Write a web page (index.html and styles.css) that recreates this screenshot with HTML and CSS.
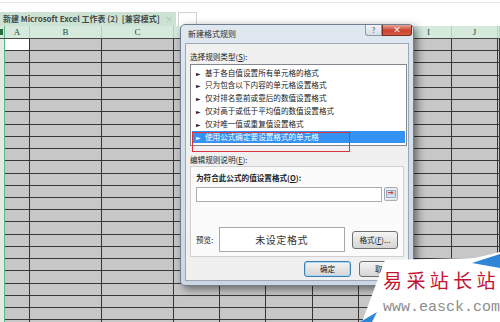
FILE: index.html
```html
<!DOCTYPE html>
<html>
<head>
	<meta charset="utf-8">
	<title>新建格式规则</title>
	<link rel="stylesheet" href="styles.css">
</head>
<body>
	<div class="strip"></div>
	<div class="tabrow">
		<div class="tab"><span>新建 Microsoft Excel 工作表 (2)&nbsp; [兼容模式]</span><span class="tab-x">×</span></div>
		<div class="newtab"></div>
	</div>

	<!-- column letters under the dialog are hidden, so those cells stay empty -->
	<div class="colheads">
		<div class="ch w-row"><span class="corner-mark"></span></div>
		<div class="ch w-a">A</div>
		<div class="ch w-b">B</div>
		<div class="ch w-c">C</div>
		<div class="ch w-d"></div>
		<div class="ch w-e"></div>
		<div class="ch w-f"></div>
		<div class="ch w-g"></div>
		<div class="ch w-h"></div>
		<div class="ch w-i">I</div>
		<div class="ch w-j">J</div>
		<div class="ch w-k"></div>
	</div>

	<div class="grid">
		<div class="col rowhead w-row"></div>
		<div class="col w-a"><div class="cell-active"></div></div>
		<div class="col w-b"></div>
		<div class="col w-c"></div>
		<div class="col w-d"></div>
		<div class="col w-e"></div>
		<div class="col w-f"></div>
		<div class="col w-g"></div>
		<div class="col w-h"></div>
		<div class="col w-i"></div>
		<div class="col w-j"></div>
		<div class="col w-k"></div>
	</div>

	<!-- dialog -->
	<div class="dlg">
		<div class="dlg-title">
			<span class="dlg-name">新建格式规则</span>
			<div class="title-btns">
				<div class="help">?</div>
				<div class="close">×</div>
			</div>
		</div>
		<div class="dlg-body">
			<div class="lbl">选择规则类型(<u>S</u>):</div>
			<div class="listbox">
				<div class="item"><span class="arr">►</span>基于各自值设置所有单元格的格式</div>
				<div class="item"><span class="arr">►</span>只为包含以下内容的单元格设置格式</div>
				<div class="item"><span class="arr">►</span>仅对排名靠前或靠后的数值设置格式</div>
				<div class="item"><span class="arr">►</span>仅对高于或低于平均值的数值设置格式</div>
				<div class="item"><span class="arr">►</span>仅对唯一值或重复值设置格式</div>
				<div class="item sel"><span class="arr">►</span>使用公式确定要设置格式的单元格</div>
			</div>
			<div class="lbl lbl2">编辑规则说明(<u>E</u>):</div>
			<div class="panel">
				<div class="p-lbl">为符合此公式的值设置格式(<u>O</u>):</div>
				<div class="formula">
					<div class="f-input"></div>
					<svg class="f-btn" width="14" height="14" viewBox="0 0 14 14">
						<rect x="0.5" y="0.5" width="13" height="13" rx="1" fill="#eef1f5" stroke="#9aa3ad"/>
						<rect x="2.5" y="3.5" width="9" height="7" fill="#d6e3f2" stroke="#7c8ca2" stroke-width="0.7"/>
						<path d="M2.5 7 H11.5" stroke="#7c8ca2" stroke-width="0.5"/>
						<path d="M4 5.5 H9 M7.5 4 L9 5.5 L7.5 7" fill="none" stroke="#d33a2b" stroke-width="1"/>
					</svg>
				</div>
				<div class="preview-row">
					<div class="pv-lbl">预览:</div>
					<div class="pv-box">未设定格式</div>
					<div class="btn fmt-btn">格式(<u>F</u>)...</div>
				</div>
			</div>
			<div class="btn-row">
				<div class="btn ok">确定</div>
				<div class="btn">取消</div>
			</div>
		</div>
		<div class="mark"></div>
	</div>

	<!-- watermark -->
	<div class="wm">
		<div class="wm-bg"></div>
		<div class="wm-tri wm-tri1"></div>
		<div class="wm-tri wm-tri2"></div>
		<div class="wm-text">
			<div class="wm-cn">易采站长站</div>
			<div class="wm-url">www.easck.com</div>
		</div>
	</div>
</body>
</html>
```

FILE: styles.css
```css
body {
	margin: 0;
	width: 500px;
	height: 322px;
	overflow: hidden;
	position: relative;
	background: #fff;
	font-family: "Noto Sans CJK SC", "Liberation Sans", sans-serif;
}

/* title strip and workbook tab */
.strip {
	height: 9px;
	margin-top: 2px;
	border-top: 1px solid #e6e6e6;
}
.tabrow {
	display: flex;
	height: 14px;
}
.tab {
	width: 176px;
	box-sizing: border-box;
	padding: 0 3px;
	display: flex;
	justify-content: space-between;
	background: #cce3d4;
	color: #474747;
	font-size: 8px;
	font-weight: bold;
	line-height: 14px;
	white-space: nowrap;
}
.tab-x {
	color: #a8b8ad;
	font-weight: normal;
}
.newtab {
	width: 17px;
	margin-left: 2px;
	border: 1px solid #d2d2d2;
	border-bottom: none;
}

/* sheet */
.colheads {
	display: flex;
	height: 12px;
	border-bottom: 1px solid #4a4a4a;
	background: #d5eadc;
}
.ch {
	box-sizing: border-box;
	border-right: 1px solid #b5d1be;
	text-align: center;
	font-family: "Liberation Serif", serif;
	font-size: 9px;
	line-height: 12px;
	color: #2c4a36;
}
.corner-mark {
	display: block;
	width: 3px;
	height: 6px;
	margin-top: 3px;
	background: #2c6b42;
}

.w-row { width: 5px; }
.w-a { width: 25px; }
.w-b { width: 72px; }
.w-c { width: 72px; }
.w-d { width: 46px; }
.w-e { width: 46px; }
.w-f { width: 47px; }
.w-g { width: 46px; }
.w-h { width: 47px; }
.w-i { width: 46px; }
.w-j { width: 46px; }
.w-k { flex: 1; }

.grid {
	display: flex;
	height: 283px;
}
.col {
	box-sizing: border-box;
	border-right: 1px solid #363636;
	background: repeating-linear-gradient(to bottom, #c7c7c7 0, #c7c7c7 11.23px, #383838 11.23px, #383838 12.23px);
}
.col.rowhead {
	background: #e3ebe5;
	border-right: 1px solid #5fb888;
}
.ch.w-row {
	border-right: 1px solid #5fb888;
}
.cell-active {
	height: 11.23px;
	background: #fff;
}

/* dialog */
.dlg {
	position: absolute;
	left: 180px;
	top: 24px;
	width: 234px;
	height: 262px;
	box-sizing: border-box;
	padding: 0 4px 4px 4px;
	border: 1px solid #6f7f90;
	border-radius: 5px;
	background: linear-gradient(#dfe7ef, #ccd7e3);
	box-shadow: 3px 3px 8px rgba(0, 0, 0, 0.5);
	display: flex;
	flex-direction: column;
	color: #222;
	font-size: 7.6px;
}
.dlg-title {
	height: 18px;
	display: flex;
	align-items: flex-start;
}
.dlg-name {
	padding-left: 3px;
	line-height: 17px;
	font-size: 8px;
	color: #2b2b2b;
}
.title-btns {
	margin-left: auto;
	margin-right: -3px;
	display: flex;
}
.help {
	width: 17px;
	height: 11px;
	box-sizing: border-box;
	border: 1px solid #8c99a8;
	border-top: none;
	border-radius: 0 0 0 3px;
	background: linear-gradient(#f1f4f8, #d5dde6);
	color: #6b7f93;
	font-size: 7px;
	font-weight: bold;
	line-height: 10px;
	text-align: center;
}
.close {
	width: 30px;
	height: 11px;
	box-sizing: border-box;
	border: 1px solid #7d2b20;
	border-top: none;
	border-radius: 0 0 3px 0;
	background: linear-gradient(#e8a494, #c8442f 55%, #d45c40);
	color: #fff;
	font-size: 8px;
	font-weight: bold;
	line-height: 10px;
	text-align: center;
}
.dlg-body {
	flex: 1;
	background: #f0f0f0;
	border: 1px solid #9aa7b5;
	padding: 0 1px 0 4px;
	display: flex;
	flex-direction: column;
}
.lbl {
	margin-top: 8px;
	line-height: 10px;
	white-space: nowrap;
}
.lbl2 {
	margin-top: 9px;
}
.listbox {
	margin-top: 2px;
	height: 82px;
	box-sizing: border-box;
	border: 1px solid #828790;
	background: #fff;
	padding: 1.6px 1px 0 1px;
}
.item {
	height: 12.8px;
	line-height: 12.8px;
	padding-left: 4px;
	white-space: nowrap;
	color: #222;
}
.item.sel {
	background: #3492f3;
	color: #fff;
}
.arr {
	display: inline-block;
	width: 9px;
	font-family: "DejaVu Sans", sans-serif;
	font-size: 6px;
}

.panel {
	margin-top: 1px;
	margin-right: 3px;
	height: 91px;
	box-sizing: border-box;
	border: 1px solid #d0d0d0;
	background: #fbfbfb;
	padding: 0 5px;
}
.p-lbl {
	margin-top: 6px;
	line-height: 10px;
	font-weight: bold;
	white-space: nowrap;
}
.formula {
	display: flex;
	align-items: flex-start;
	gap: 2px;
	margin-top: 4px;
}
.f-input {
	width: 189px;
	height: 15px;
	box-sizing: border-box;
	border: 1px solid #abadb3;
	background: #fff;
}
.preview-row {
	display: flex;
	align-items: center;
	margin-top: 25px;
}
.pv-lbl {
	width: 23px;
}
.pv-box {
	width: 128px;
	height: 25px;
	box-sizing: border-box;
	border: 1px solid #a8a8a8;
	background: #fff;
	text-align: center;
	line-height: 23px;
	font-size: 10px;
	letter-spacing: 0.6px;
	color: #333;
}
.btn {
	width: 47px;
	height: 16px;
	box-sizing: border-box;
	border: 1px solid #707070;
	border-radius: 3px;
	background: linear-gradient(#f5f5f5, #e4e4e4 50%, #d5d5d5);
	text-align: center;
	line-height: 14px;
	white-space: nowrap;
}
.fmt-btn {
	margin-left: 7px;
	height: 18px;
	line-height: 16px;
}
.btn-row {
	display: flex;
	justify-content: flex-end;
	gap: 8px;
	margin-top: 4px;
	margin-right: 1px;
}
.btn.ok {
	border-color: #3c7fb1;
	box-shadow: inset 0 0 0 1px #a6d8f5;
}
.mark {
	position: absolute;
	left: 11px;
	top: 107px;
	width: 158px;
	height: 20px;
	box-sizing: border-box;
	border: 1.5px solid #d9333f;
}

/* watermark */
.wm {
	position: absolute;
	left: 355px;
	top: 250px;
	width: 145px;
	height: 72px;
}
.wm-bg {
	position: absolute;
	inset: 0;
	background: #fff;
	clip-path: polygon(30px 10px, 120px 8px, 145px 2px, 145px 72px, 7px 72px);
}
.wm-tri {
	position: absolute;
	inset: 0;
	background: #2f86d6;
}
.wm-tri1 {
	clip-path: polygon(117px 13px, 145px 4px, 145px 18px);
}
.wm-tri2 {
	clip-path: polygon(5px 72px, 22px 62px, 17px 72px);
}
.wm-text {
	position: relative;
	padding: 19px 0 0 28px;
}
.wm-cn {
	font-size: 19px;
	line-height: 22px;
	letter-spacing: 4.4px;
	color: #c4122f;
	white-space: nowrap;
}
.wm-url {
	margin-top: 9px;
	font-family: "Liberation Mono", monospace;
	font-size: 15px;
	line-height: 15px;
	color: #8d8d8d;
	white-space: nowrap;
}
```
